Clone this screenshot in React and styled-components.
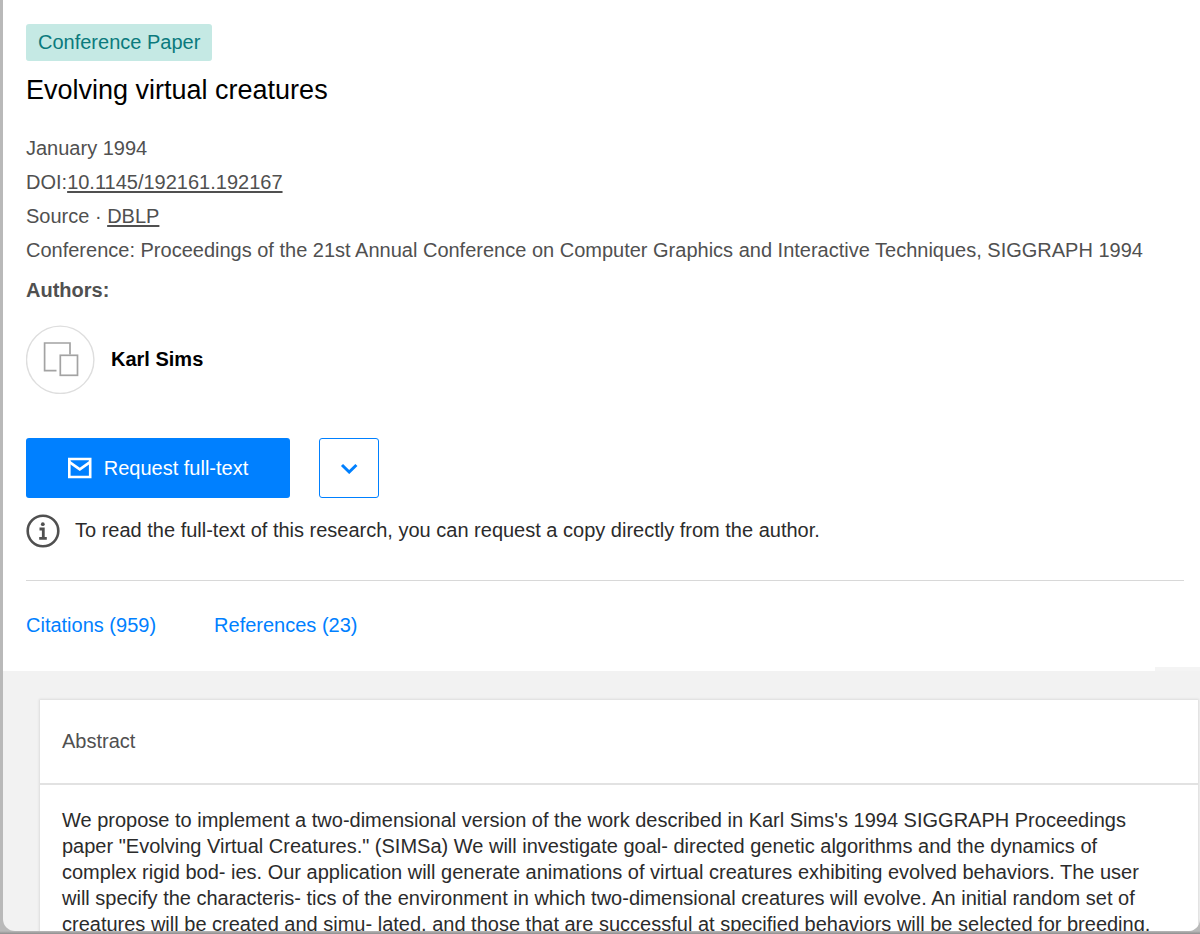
import React from 'react';
import styled, { createGlobalStyle } from 'styled-components';

const GlobalStyle = createGlobalStyle`
* {
box-sizing: border-box;
}
body {
margin: 0;
background: #b9b9b9;
font-family: "Liberation Sans", Arial, sans-serif;
font-size: 20px;
color: #2b2b2b;
}
`;

const Backdrop = styled.div`
height: 100vh;
padding: 0 0 3px 3px;
background: linear-gradient(to top, #8e8e8e 0, #b9b9b9 3px);
`;

const Main = styled.main`
height: 100%;
overflow: hidden;
display: flex;
flex-direction: column;
background: #f2f2f2;
border-radius: 0 0 12px 12px;
`;

const Header = styled.header`
position: relative;
flex: none;
padding: 24px 16px 0 23px;
background: #fff;
`;

const HeaderNotch = styled.span`
position: absolute;
right: 0;
bottom: 0;
width: 45px;
height: 4px;
background: #f4f4f4;
`;

const Badge = styled.span`
display: block;
width: fit-content;
padding: 0 12px;
line-height: 36px;
border-bottom: 1px solid #c5e9e4;
border-radius: 3px;
background: #c5e9e4;
color: #0b7a7d;
`;

const Title = styled.h1`
margin: 12px 0 24px;
font-size: 27px;
font-weight: 400;
line-height: 34px;
color: #000;
`;

const Meta = styled.div`
line-height: 34px;
color: #505050;
`;

const MetaLink = styled.a`
color: inherit;
text-decoration: underline;
text-decoration-thickness: 2px;
text-underline-offset: 2px;
`;

const AuthorsLabel = styled.h2`
margin: 6px 0 18px;
font-size: 20px;
line-height: 34px;
color: #505050;
`;

const Author = styled.div`
display: flex;
align-items: center;
gap: 16px;
font-weight: 700;
color: #000;
`;

const Avatar = styled.svg`
width: 69px;
height: 69px;
fill: none;
`;

const Actions = styled.div`
display: flex;
gap: 29px;
margin-top: 44px;
`;

const RequestButton = styled.button`
display: flex;
align-items: center;
justify-content: center;
gap: 12px;
width: 264px;
height: 60px;
padding: 0;
border: 0;
border-radius: 3px;
background: #0080ff;
color: #fff;
font: inherit;
`;

const MoreButton = styled.button`
display: flex;
align-items: center;
justify-content: center;
width: 60px;
height: 60px;
padding: 0;
border: 1px solid #0080ff;
border-radius: 3px;
background: #fff;
`;

const Note = styled.p`
display: flex;
align-items: center;
gap: 15px;
margin: 15px 0 32px;
line-height: 35px;
`;

const Tabs = styled.nav`
display: flex;
gap: 58px;
padding: 28px 0 29px;
border-top: 1px solid #d8d8d8;
line-height: 33px;
`;

const Tab = styled.a`
color: #0080ff;
text-decoration: none;
`;

const Card = styled.section`
flex: none;
margin: 29px 2px 0 37px;
background: #fff;
box-shadow: 0 0 2px 1px #dcdcdc;
`;

const CardTitle = styled.h2`
margin: 0;
padding: 0 22px;
border-bottom: 2px solid #e2e2e2;
font-size: 20px;
font-weight: 400;
line-height: 83px;
color: #505050;
`;

const CardText = styled.p`
margin: 0;
padding: 22px;
line-height: 26px;
`;

const AbstractLine = styled.span`
display: block;
white-space: nowrap;
`;

const abstractLines = [
    "We propose to implement a two-dimensional version of the work described in Karl Sims's 1994 SIGGRAPH Proceedings",
    'paper "Evolving Virtual Creatures." (SIMSa) We will investigate goal- directed genetic algorithms and the dynamics of',
    'complex rigid bod- ies. Our application will generate animations of virtual creatures exhibiting evolved behaviors. The user',
    'will specify the characteris- tics of the environment in which two-dimensional creatures will evolve. An initial random set of',
    'creatures will be created and simu- lated, and those that are successful at specified behaviors will be selected for breeding.',
];

const MailIcon = () => (
    <svg width="24" height="22" viewBox="0 0 24 22" fill="none" stroke="#fff" aria-hidden="true">
        <path d="M1.3 2H22.2V20H1.3Z" strokeWidth="2.6" />
        <path d="M1.5 5.2L11.8 12.4L22 5.2" strokeWidth="2.8" />
    </svg>
);

const ChevronIcon = () => (
    <svg width="18" height="12" viewBox="0 0 18 12" fill="none" stroke="#0080ff" strokeWidth="3" aria-hidden="true">
        <path d="M2 3L9.2 10L16.4 3" />
    </svg>
);

const InfoIcon = () => (
    <svg width="34" height="34" viewBox="0 0 34 34" fill="none" aria-hidden="true">
        <circle cx="17" cy="17" r="15.3" stroke="#505050" strokeWidth="2.6" />
        <circle cx="16.8" cy="10.2" r="1.9" fill="#505050" />
        <path d="M13.5 15H17.3V24M13.2 24.3H20.8" stroke="#505050" strokeWidth="2.8" />
    </svg>
);

const App = () => {
    return (
        <Backdrop>
            <GlobalStyle />
            <Main>
                <Header>
                    <Badge>Conference Paper</Badge>
                    <Title>Evolving virtual creatures</Title>
                    <Meta>January 1994</Meta>
                    <Meta>DOI:<MetaLink href="#doi">10.1145/192161.192167</MetaLink></Meta>
                    <Meta>Source · <MetaLink href="#dblp">DBLP</MetaLink></Meta>
                    <Meta>Conference: Proceedings of the 21st Annual Conference on Computer Graphics and Interactive Techniques, SIGGRAPH 1994</Meta>
                    <AuthorsLabel>Authors:</AuthorsLabel>
                    <Author>
                        <Avatar viewBox="0 0 69 69" aria-hidden="true">
                            <circle cx="34.2" cy="34.8" r="33.7" stroke="#dedede" strokeWidth="1.4" />
                            <path d="M30.5 45.6H18.6V18H44V29.5" stroke="#a3a3a3" strokeWidth="1.7" />
                            <rect x="34.3" y="30.3" width="17.2" height="20" stroke="#a3a3a3" strokeWidth="1.7" />
                        </Avatar>
                        <span>Karl Sims</span>
                    </Author>
                    <Actions>
                        <RequestButton type="button">
                            <MailIcon />
                            <span>Request full-text</span>
                        </RequestButton>
                        <MoreButton type="button" aria-label="More options">
                            <ChevronIcon />
                        </MoreButton>
                    </Actions>
                    <Note>
                        <InfoIcon />
                        To read the full-text of this research, you can request a copy directly from the author.
                    </Note>
                    <Tabs>
                        <Tab href="#citations">Citations (959)</Tab>
                        <Tab href="#references">References (23)</Tab>
                    </Tabs>
                    <HeaderNotch />
                </Header>
                <Card>
                    <CardTitle>Abstract</CardTitle>
                    <CardText>
                        {abstractLines.map((line) => (
                            <AbstractLine key={line}>{line}</AbstractLine>
                        ))}
                    </CardText>
                </Card>
            </Main>
        </Backdrop>
    );
};

export default App;
